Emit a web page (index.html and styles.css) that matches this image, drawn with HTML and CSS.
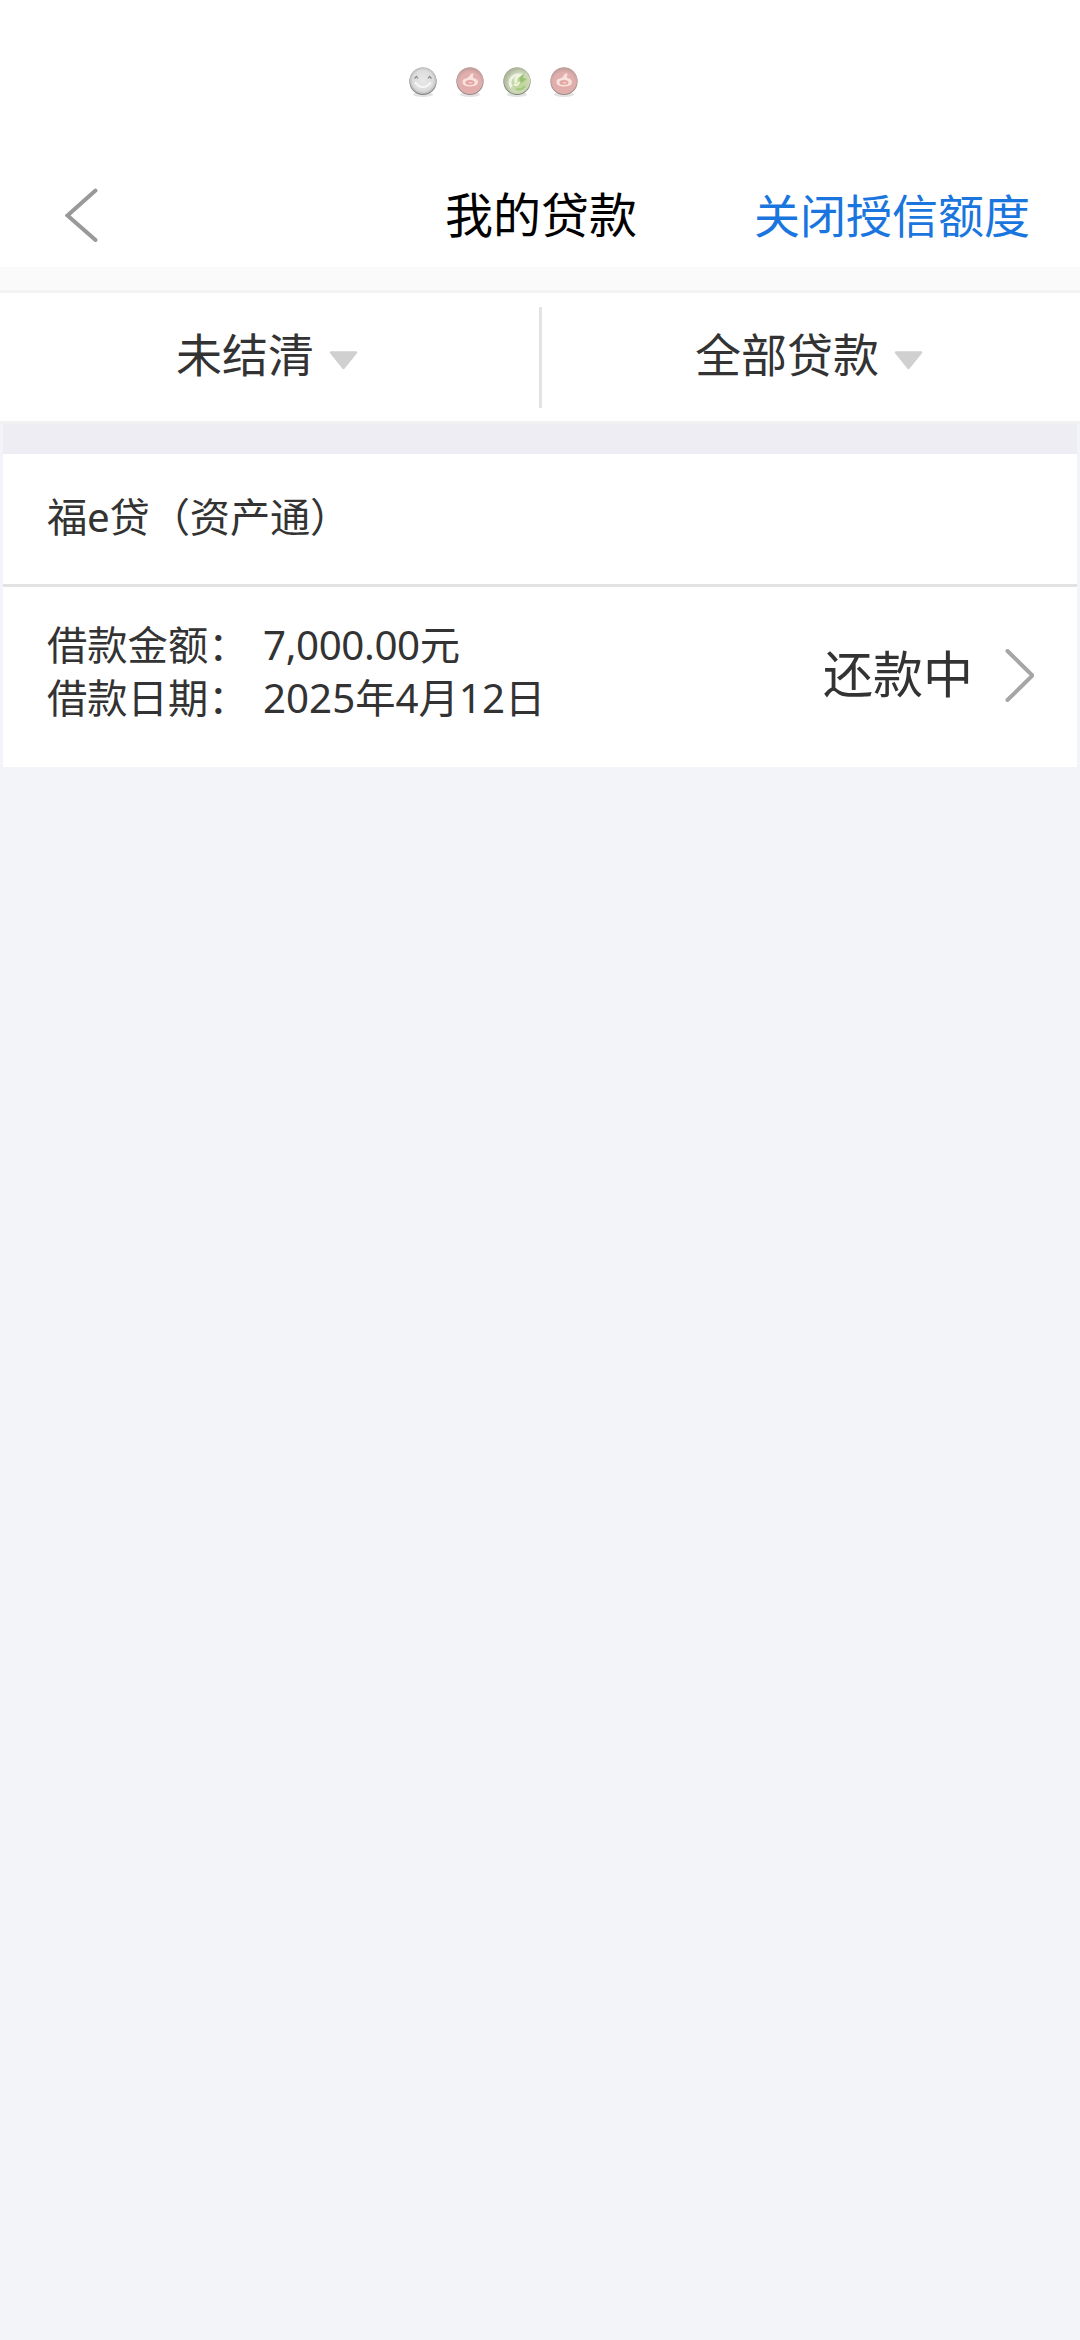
FILE: index.html
```html
<!DOCTYPE html>
<html lang="zh-CN">
<head>
<meta charset="utf-8">
<title>我的贷款</title>
<link rel="stylesheet" href="styles.css">
</head>
<body>
<svg class="defs" width="0" height="0" aria-hidden="true">
  <defs>
    <radialGradient id="gray" cx=".5" cy=".5" r=".52"><stop offset="0" stop-color="#e8e8e8"/><stop offset=".75" stop-color="#dcdcdc"/><stop offset="1" stop-color="#b4b4b4"/></radialGradient>
    <radialGradient id="pink" cx=".5" cy=".6" r=".58"><stop offset="0" stop-color="#e6a7a5"/><stop offset=".7" stop-color="#e0b0ae"/><stop offset="1" stop-color="#c09c9a"/></radialGradient>
    <radialGradient id="green" cx=".6" cy=".6" r=".6"><stop offset="0" stop-color="#b9d68d"/><stop offset=".65" stop-color="#ced8ba"/><stop offset="1" stop-color="#aab39a"/></radialGradient>
    <symbol id="swirl" viewBox="0 0 32 34">
      <ellipse cx="16" cy="29.500" rx="10" ry="2.500" fill="#e2e2e2"/>
      <circle cx="16" cy="16.400" r="13.600" fill="#9a8685"/>
      <circle cx="16" cy="15.600" r="13.300" fill="url(#pink)"/>
      <path d="M8.500 17c0-4 4-3 6-5 1.500-1.500 2-4 4.500-3.500 1.500.5-.5 2.500 0 4 1 1 5 1 5 4.500s-4 4.500-8 4.500-7.500-1-7.500-4.500z" fill="#f8e0dc"/>
      <ellipse cx="16" cy="17.500" rx="4.500" ry="2.500" fill="#e3a3a0"/>
      <ellipse cx="16.500" cy="17.800" rx="2.200" ry="1" fill="#f2cbc7"/>
    </symbol>
  </defs>
</svg>
<div class="status">
  <svg class="ball" viewBox="0 0 32 34">
    <ellipse cx="16" cy="29.500" rx="10" ry="2.500" fill="#e2e2e2"/>
    <circle cx="16" cy="16.400" r="13.600" fill="#808080"/>
    <circle cx="16" cy="15.600" r="13.300" fill="url(#gray)"/>
    <path d="M8 17.500q8 9 16 0" fill="none" stroke="#f7f7f7" stroke-width="2"/>
    <path d="M7.500 13.500l2-2 1.500 2M21 13.500l1.500-2 2 2" fill="none" stroke="#888" stroke-width="1.200"/>
  </svg>
  <svg class="ball"><use href="#swirl"/></svg>
  <svg class="ball" viewBox="0 0 32 34">
    <ellipse cx="16" cy="29.500" rx="10" ry="2.500" fill="#e2e2e2"/>
    <circle cx="16" cy="16.400" r="13.600" fill="#7c836f"/>
    <circle cx="16" cy="15.600" r="13.300" fill="url(#green)"/>
    <path d="M10 21c-3-6 2-12 9-11-4 2-5 4-4 7" fill="none" stroke="#eef3e2" stroke-width="2.800" stroke-linecap="round"/>
    <path d="M13 19c2 2 5 1 5-2" fill="none" stroke="#eef3e2" stroke-width="2"/>
    <path d="M18 13l5-5-1 5 4 1-6 4z" fill="#9cc26f"/>
    <path d="M15 24c4 1 7 0 9-3" fill="none" stroke="#a3ca78" stroke-width="2"/>
  </svg>
  <svg class="ball"><use href="#swirl"/></svg>
</div>
<header class="nav">
  <svg class="back" viewBox="0 0 34 54"><path d="M30.500 2.500L2.500 27.500 30.500 52"/></svg>
  <h1 class="title">我的贷款</h1>
  <a class="action">关闭授信额度</a>
</header>
<div class="strip"></div>
<div class="filters">
  <div class="filter left"><span>未结清</span><svg class="caret" viewBox="0 0 29 19"><path d="M2 1.500h25L14.500 17z"/></svg></div>
  <div class="divider"></div>
  <div class="filter right"><span>全部贷款</span><svg class="caret" viewBox="0 0 29 19"><path d="M2 1.500h25L14.500 17z"/></svg></div>
</div>
<main class="list">
  <section class="card">
    <h2 class="name">福e贷（资产通）</h2>
    <div class="detail">
      <dl class="facts">
        <dt>借款金额：</dt><dd class="amount">7,000.00元</dd>
        <dt>借款日期：</dt><dd>2025年4月12日</dd>
      </dl>
      <span class="state">还款中</span>
      <svg class="go" viewBox="0 0 29 53"><path d="M2.500 2L27.500 26.500 2.500 51"/></svg>
    </div>
  </section>
</main>
</body>
</html>
```

FILE: styles.css
```css
* { box-sizing: border-box; margin: 0; padding: 0; }
body {
  width: 1080px;
  height: 2340px;
  display: flex;
  flex-direction: column;
  background: #f2f4f9;
  color: #333;
  font-family: "Noto Sans", "Noto Sans CJK SC", sans-serif;
  overflow: hidden;
}
.defs { position: absolute; }
.status {
  height: 162px;
  padding: 65px 0 0 407px;
  display: flex;
  gap: 15px;
  background: #fff;
}
.ball { width: 32px; height: 34px; }
.nav {
  height: 105px;
  display: grid;
  grid-template-columns: 380px 1fr 380px;
  align-items: center;
  padding: 0 50px 0 65px;
  background: #fff;
}
.back { width: 34px; height: 54px; margin-top: 1px; }
.back path, .go path { fill: none; stroke: #999; stroke-width: 4; stroke-linecap: round; }
.title { font-size: 48px; line-height: 60px; font-weight: 400; color: #000; white-space: nowrap; }
.action { font-size: 46px; line-height: 60px; color: #1a76de; text-align: right; white-space: nowrap; }
.strip { height: 26px; background: #fafafa; border-bottom: 3px solid #f3f3f3; }
.filters {
  height: 131px;
  display: grid;
  grid-template-columns: 539px 3px 1fr;
  align-items: center;
  background: #fff;
  border-bottom: 3px solid #f1f1f1;
}
.filter { display: flex; align-items: center; gap: 15px; font-size: 46px; line-height: 60px; padding-bottom: 7px; }
.left { padding-left: 176px; }
.right { padding-left: 153px; }
.caret { width: 29px; height: 19px; margin-top: 13px; }
.caret path { fill: #d0d0d0; stroke: #d0d0d0; stroke-width: 2.500; stroke-linejoin: round; }
.divider { height: 101px; background: #e3e3e3; }
.list { padding: 0 3px; }
.card { border-top: 30px solid #eeedf4; background: #fff; }
.name {
  height: 133px;
  padding: 33px 44px 0;
  font-size: 40.300px;
  line-height: 60px;
  font-weight: 400;
  letter-spacing: -.2px;
  border-bottom: 3px solid #e3e3e3;
}
.detail { height: 180px; display: flex; align-items: center; padding: 0 43px 3px 44px; }
.facts {
  flex: 1;
  display: grid;
  grid-template-columns: 216px 1fr;
  margin-top: -9px;
  font-size: 40.300px;
  line-height: 53px;
}
.amount { letter-spacing: -.4px; }
.state { font-size: 50px; line-height: 60px; margin-top: -3px; }
.go { width: 29px; height: 53px; margin-left: 32px; }
.go path { stroke: #a6a6a6; }
```
